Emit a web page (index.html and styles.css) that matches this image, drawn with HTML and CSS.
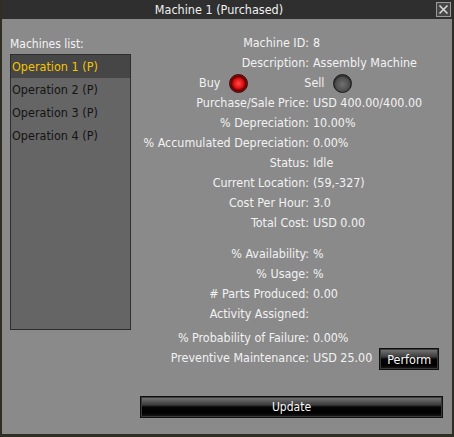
FILE: index.html
```html
<!DOCTYPE html>
<html>
<head>
<meta charset="utf-8">
<link rel="stylesheet" href="styles.css">
</head>
<body>
<div class="window">
  <div class="titlebar">
    <div class="title">Machine 1 (Purchased)</div>
    <div class="close">
      <svg width="13" height="13" viewBox="0 0 13 13"><path d="M2.5 2.5 L10.5 10.5 M10.5 2.5 L2.5 10.5" stroke="#d8d8d8" stroke-width="1.6" fill="none"/></svg>
    </div>
  </div>
  <div class="content">
    <div class="left">
      <div class="list-label">Machines list:</div>
      <div class="list">
        <div class="item selected">Operation 1 (P)</div>
        <div class="item">Operation 2 (P)</div>
        <div class="item">Operation 3 (P)</div>
        <div class="item">Operation 4 (P)</div>
      </div>
    </div>
    <div class="right">
      <div class="form">
        <div class="lbl">Machine ID:</div><div class="val">8</div>
        <div class="lbl">Description:</div><div class="val">Assembly Machine</div>
        <div class="buysell">
          <span class="bs-label buy-label">Buy</span><span class="radio on"></span>
          <span class="bs-label sell-label">Sell</span><span class="radio"></span>
        </div>
        <div class="lbl">Purchase/Sale Price:</div><div class="val">USD 400.00/400.00</div>
        <div class="lbl">% Depreciation:</div><div class="val">10.00%</div>
        <div class="lbl">% Accumulated Depreciation:</div><div class="val">0.00%</div>
        <div class="lbl">Status:</div><div class="val">Idle</div>
        <div class="lbl">Current Location:</div><div class="val">(59,-327)</div>
        <div class="lbl">Cost Per Hour:</div><div class="val">3.0</div>
        <div class="lbl">Total Cost:</div><div class="val">USD 0.00</div>
        <div class="lbl gap-big">% Availability:</div><div class="val gap-big">%</div>
        <div class="lbl">% Usage:</div><div class="val">%</div>
        <div class="lbl"># Parts Produced:</div><div class="val">0.00</div>
        <div class="lbl">Activity Assigned:</div><div class="val"></div>
        <div class="lbl gap-small">% Probability of Failure:</div><div class="val gap-small">0.00%</div>
        <div class="lbl">Preventive Maintenance:</div><div class="val with-btn">USD 25.00<span class="btn perform">Perform</span></div>
      </div>
      <div class="btn update">Update</div>
    </div>
  </div>
</div>
</body>
</html>
```
FILE: styles.css
```css
html, body {
  margin: 0;
  padding: 0;
}
body {
  width: 454px;
  height: 437px;
  background: #2f2e22;
  font-family: "DejaVu Sans Condensed", "DejaVu Sans", sans-serif;
  font-size: 12px;
  color: #f2f2f2;
  overflow: hidden;
}
.window {
  margin-left: 2px;
  width: 450px;
  height: 434px;
  background: #8a8a8a;
  display: flex;
  flex-direction: column;
}
.titlebar {
  height: 19px;
  background: #2f2f2f;
  display: flex;
  align-items: center;
}
.title {
  flex: 1;
  text-align: center;
  font-size: 12.5px;
  color: #f0f0f0;
  line-height: 19px;
}
.close {
  width: 13px;
  height: 13px;
  margin-right: 1px;
  border: 1px solid #9a9a9a;
  background: #474747;
  display: flex;
}
.content {
  display: flex;
  padding: 14px 9px 0 8px;
}
.left {
  width: 121px;
  flex: none;
}
.list-label {
  height: 20px;
  line-height: 20px;
  margin-top: 1px;
  color: #f4f4f4;
}
.list {
  height: 274px;
  border: 1px solid #2e2e2e;
  background: #656565;
}
.item {
  height: 23px;
  line-height: 23px;
  padding-left: 1px;
  color: #141414;
  font-size: 12.5px;
}
.item.selected {
  background: #464646;
  color: #f5c400;
}
.right {
  flex: 1;
  display: flex;
  flex-direction: column;
}
.form {
  display: grid;
  grid-template-columns: 178px 1fr;
  column-gap: 4px;
  line-height: 20px;
  font-size: 12.4px;
}
.lbl, .val {
  height: 20px;
  white-space: nowrap;
}
.lbl {
  text-align: right;
}
.gap-big {
  margin-top: 11px;
}
.gap-small {
  margin-top: 4px;
}
.buysell {
  grid-column: 1 / -1;
  display: flex;
  align-items: center;
  height: 20px;
}
.buy-label {
  margin-left: 68px;
}
.bs-label {
  line-height: 20px;
}
.radio {
  width: 17px;
  height: 17px;
  border-radius: 50%;
  border: 1px solid #1a1a1a;
  background: radial-gradient(circle at 50% 55%, #707070 0%, #4e4e4e 55%, #2a2a2a 68%, #6a6a6a 84%, #1e1e1e 100%);
  margin-left: 9px;
}
.radio.on {
  border-color: #4a0000;
  background: radial-gradient(circle at 50% 50%, #ff4a4a 0%, #e01010 40%, #5a0000 62%, #b03030 78%, #400000 100%);
}
.sell-label {
  margin-left: 56px;
}
.with-btn {
  display: flex;
  align-items: center;
  gap: 7px;
}
.btn {
  box-sizing: border-box;
  border: 1px solid #101010;
  box-shadow: inset 0 0 0 1px #3a3a3a;
  background: linear-gradient(#7a7a7a 0%, #3a3a3a 40%, #050505 50%, #000 80%, #1c1c1c 100%);
  color: #f8f8f8;
  text-align: center;
}
.perform {
  flex: none;
  width: 60px;
  height: 22px;
  line-height: 22px;
  font-size: 12.5px;
  margin-top: 2px;
}
.update {
  margin-top: 28px;
  margin-left: 9px;
  width: 303px;
  height: 22px;
  line-height: 21px;
}
```
